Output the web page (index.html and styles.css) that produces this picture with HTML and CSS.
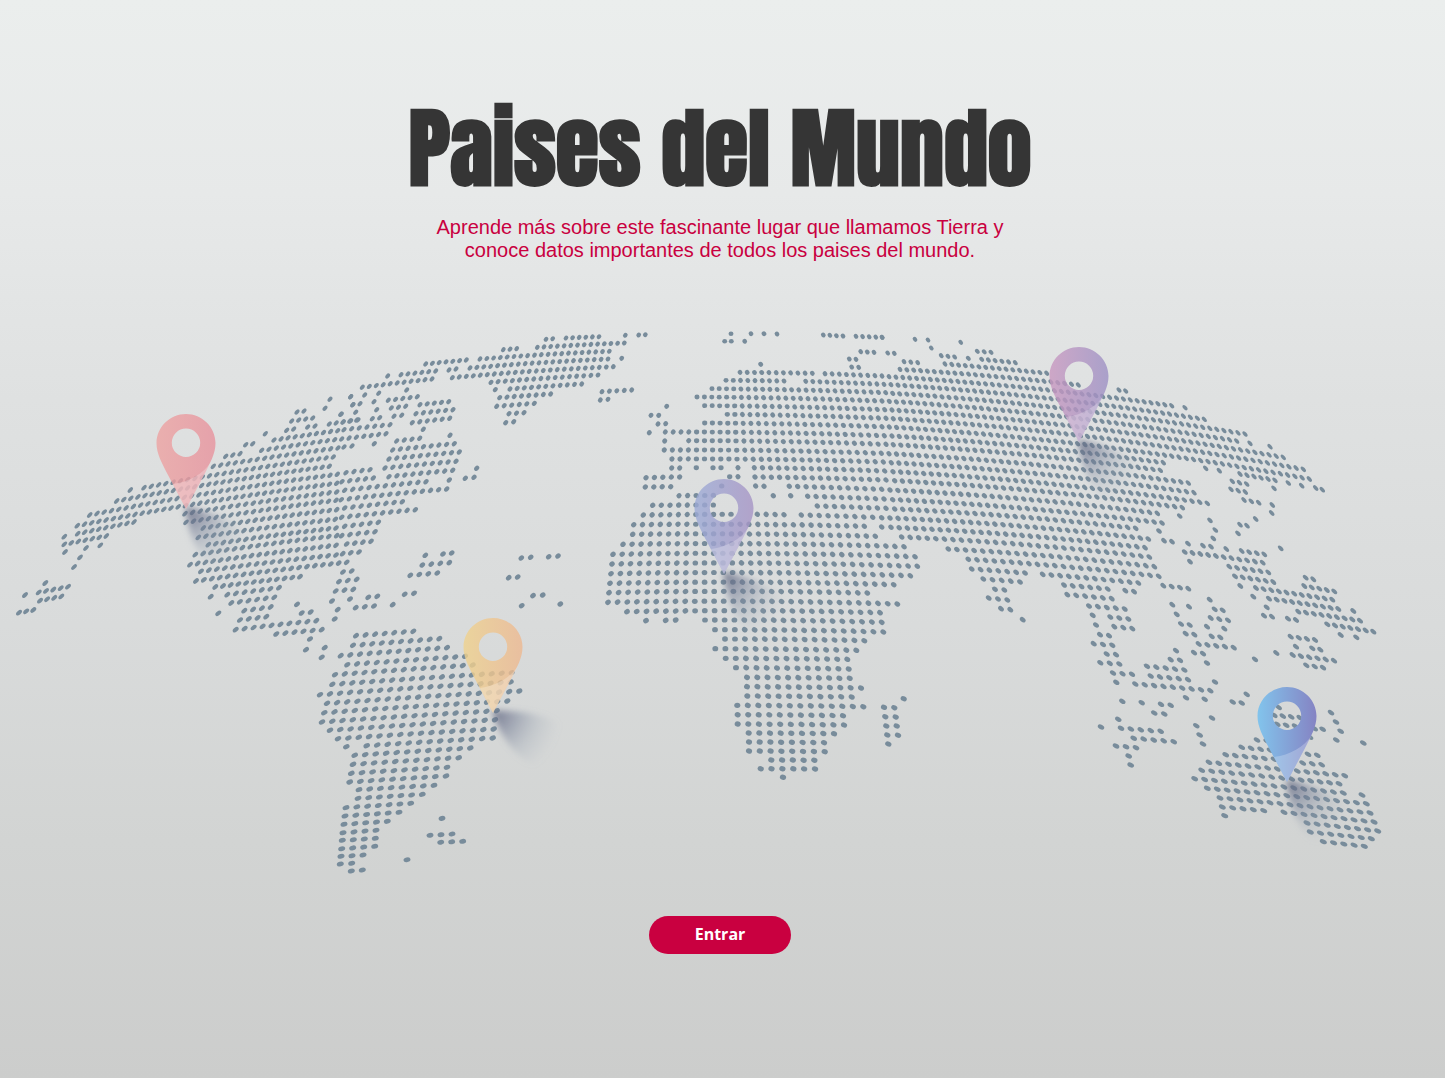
FILE: index.html
```html
<!DOCTYPE html>
<html lang="es">
<head>
  <meta charset="utf-8">
  <meta name="viewport" content="width=device-width, initial-scale=1">
  <title>Paises del Mundo</title>
  <link rel="stylesheet" href="styles.css">
</head>
<body>
  <main class="landing">
    <h1 class="title">Paises del Mundo</h1>
    <p class="intro">Aprende más sobre este fascinante lugar que llamamos Tierra y conoce datos importantes de todos los paises del mundo.</p>
    <svg class="map" viewBox="0 0 1445 565" role="img" aria-label="Mapa del mundo">
      <defs>
        <linearGradient id="red"><stop offset="0" stop-color="#eda3a2"/><stop offset="1" stop-color="#e7929d"/></linearGradient>
        <linearGradient id="orange"><stop offset="0" stop-color="#efd28d"/><stop offset="1" stop-color="#edb891"/></linearGradient>
        <linearGradient id="violet"><stop offset="0" stop-color="#9cabd6"/><stop offset="1" stop-color="#a694c5"/></linearGradient>
        <linearGradient id="purple"><stop offset="0" stop-color="#c998c0"/><stop offset="1" stop-color="#9c90c4"/></linearGradient>
        <linearGradient id="blue"><stop offset="0" stop-color="#82c4ec"/><stop offset="1" stop-color="#8583c3"/></linearGradient>
        <radialGradient id="shade" gradientUnits="userSpaceOnUse" cx="0" cy="0" r="68">
          <stop offset="0" stop-color="#5f657f" stop-opacity=".8"/>
          <stop offset=".3" stop-color="#6d7590" stop-opacity=".52"/>
          <stop offset=".65" stop-color="#8c98aa" stop-opacity=".24"/>
          <stop offset="1" stop-color="#a0aab8" stop-opacity="0"/>
        </radialGradient>
        <filter id="soft" x="-20%" y="-20%" width="140%" height="140%"><feGaussianBlur stdDeviation="3"/></filter>
        <path id="pin" fill-rule="evenodd" d="M0-95C-16-95-29.500-82-29.500-66C-29.500-55-24-46-18-34L0 0L18-34C24-46 29.500-55 29.500-66C29.500-82 16-95 0-95ZM0-80.500A14.200 14.200 0 1 1 0-52.100A14.200 14.200 0 1 1 0-80.500Z"/>
        <path id="tip" d="M-13-25C3-27 17-35 25-47L18-34L0 0Z"/>
        <path id="shadow" d="M-1-2C22-3 46 0 66 10L62 56C38 58 12 38-1-2Z"/>
      </defs>
      <g id="dots" class="dots"></g>
      <g class="pins">
        <g transform="translate(186 189)"><use href="#shadow" class="shadow" transform="rotate(13)"/><use href="#pin" fill="url(#red)" class="glass"/><use href="#tip" class="shine"/></g>
        <g transform="translate(493 393)"><use href="#shadow" class="shadow"/><use href="#pin" fill="url(#orange)" class="glass"/><use href="#tip" class="shine"/></g>
        <g transform="translate(724 254)"><use href="#shadow" class="shadow" transform="rotate(13)"/><use href="#pin" fill="url(#violet)" class="glass"/><use href="#tip" class="shine"/></g>
        <g transform="translate(1079 122)"><use href="#shadow" class="shadow" transform="rotate(13)"/><use href="#pin" fill="url(#purple)" class="glass"/><use href="#tip" class="shine"/></g>
        <g transform="translate(1287 462)"><use href="#shadow" class="shadow" transform="rotate(13)"/><use href="#pin" fill="url(#blue)"/><use href="#tip" class="shine"/></g>
      </g>
    </svg>
    <button class="enter" type="button">Entrar</button>
  </main>
  <script src="map.js"></script>
</body>
</html>
```
FILE: styles.css
```css
* {
  box-sizing: border-box;
}

body {
  margin: 0;
  min-height: 100vh;
  font-family: "Liberation Sans", Arial, sans-serif;
  background: linear-gradient(#ebeeed 0%, #e7e9e9 18%, #dfe1e1 37%, #d9dbdb 58%, #d2d4d3 78%, #cccdcc 100%);
}

.landing {
  display: flex;
  flex-direction: column;
  align-items: center;
  padding: 100px 0 120px;
}

.title {
  margin: 0;
  padding-right: 5px;
  color: #353535;
  font-family: Anton, "Liberation Sans Narrow", "Liberation Sans", sans-serif;
  font-size: 88px;
  font-weight: 700;
  line-height: 96px;
}

.intro {
  width: 100%;
  max-width: 580px;
  margin: 20px 5px 58px 0;
  color: #c90040;
  font-size: 20px;
  line-height: 23px;
  text-align: center;
}

.map {
  display: block;
  width: 100%;
  height: auto;
}

.dots {
  fill: #788c9b;
}

.shadow {
  fill: url(#shade);
  filter: url(#soft);
}

.glass {
  opacity: 0.8;
}

.shine {
  fill: #ffffff;
  opacity: 0.24;
}

.enter {
  width: 142px;
  height: 38px;
  margin: 31px 5px 0 0;
  padding: 0 0 2px;
  border: 0;
  border-radius: 19px;
  background: #c90040;
  color: #ffffff;
  font-family: "Open Sans", "Noto Sans", sans-serif;
  font-size: 16px;
  font-weight: 700;
  cursor: pointer;
}
```
FILE: map.js
```js
// Each region lists runs of dots, three units to a pixel, from its own origin.
// A run is "x y" (one dot), "x y x2 y2" (two dots) or "x y x2 y2 count".
const regions = [
  { x: 0, y: 0, bend: 0.0001, runs: `
57 878 100 870 3;75 825;120 842 184 829 4;116 817 204 800 5;136 789;222 741;240 712;258 684;301 676;195 696;
193 673 319 648 7;193 650;233 641 402 606 9;391 510;232 617 1010 490 37;269 585 1012 463 35;350 543 988 439 31;
432 503 1000 411 27;640 439 1014 384 18;677 409 720 401 3;785 391 1004 359 11;737 374 758 371;822 360 1013 332 10;
796 341;860 331 881 327;923 321 945 318;988 312 1070 300 5;875 303 938 294 4;1022 283;891 276 912 273;1067 277;
975 265;1058 254;990 238;1052 230;
555 581 1010 516 21;558 607 1008 541 21;610 624 1010 569 19;595 652 1006 598 19;625 674 1008 624 18;
586 704 1010 647 19;570 734 1008 676 20;603 754 1008 705 18;588 783 1040 727 20;646 801 900 770 12;
632 830;682 824 837 803 7;694 849 823 832 6;655 880;733 872 812 861 4;720 900 799 890 4;707 929 949 902 10;
829 942 965 929 6;905 879 932 876;891 853;930 957;1029 756 1055 753;1017 785 1070 778 3;1007 813 1060 808 3;
996 843;1050 837;1013 869;1004 897` },
  { x: 340, y: 0, bend: 0.0001, runs: `
12 329 150 314 7;5 357 138 341 7;12 381 36 378;103 371;18 458 90 449 4;135 444 348 424 10;6 485 100 474 5;
147 470 338 451 9;14 511 258 485 11;328 480;4 539 320 507 14;14 564 187 545 8;5 592 226 569 10;14 619 115 607 5;
5 647 105 635 5;20 672 93 664 4;8 701 57 696 3;147 417 358 396 10;158 390 343 371 9;170 363 239 355 4;330 346;
250 328;217 308 329 295 6;228 281 339 269 6;240 254 326 245 5;162 289 185 286;154 264 197 259 3;145 241 232 230 5;
200 210;97 296 119 293;110 269;102 245;116 220;10 306 54 300 3;4 283;39 254 60 251;32 230;74 225;
67 202 276 177 11;143 168;183 164 287 153 6;257 132 379 120 7;327 150 348 147;
618 58 638 56;678 54 777 50 6;592 82 853 69 14;490 89 530 86 3;420 117 808 94 20;390 144 804 117 21;
337 173 820 140 24;453 187 774 165 16;510 207 725 192 11;466 209;479 233 632 222 8;470 259 583 250 6;
507 281 552 278 3;497 308 521 305;856 46;896 45 916 44;845 115;786 215 875 210 5;781 240 804 238;
410 445;376 475 402 472;256 706;309 702 335 699;247 735 328 728 4;211 766 292 759 4;194 823 222 820;158 854;
85 832 112 829;47 863 102 858 3;544 714 572 712;626 710 654 708;506 773 533 771;579 827 608 825;545 857;661 852` },
  { x: 280, y: 280, bend: 0.00003, runs: `
228 107 400 94 7;219 136 478 116 10;182 167 501 143 12;202 194 555 169 13;165 224 578 195 15;157 253 695 218 19;
120 284 692 246 20;141 310 718 273 20;133 338 682 303 19;126 366 650 332 18;150 391 645 359 17;174 416 641 387 16;
199 440;260 437 638 414 13;224 466 571 444 12;219 493 536 473 11;214 520 501 502 10;209 546 498 528 10;
237 569 462 556 8;234 595 427 583 7;198 623 392 610 7;195 648 357 637 6;192 673 322 664 5;189 698 288 691 4;
187 721 286 715 4;185 746 284 739 4;183 769 249 765 3;181 792 215 790;214 813 247 810;
486 655;450 706 516 702 3;482 727 548 724 3;381 779;125 172;134 143;78 149` },
  { x: 580, y: 0, bend: 0.00006, runs: `
453 41;513 41;552 41;591 42;434 64 454 64;494 64;542 133;730 45 789 48 4;828 49 907 52 5;842 95 882 97 3;
923 99 943 100;808 117 828 118;815 141 836 142;480 157 697 160 11;735 161 906 168 9;438 181 612 183 9;
677 184 912 193 12;396 206 917 218 25;351 231 906 243 26;374 257 914 269 25;442 283 918 295 22;374 309 906 320 24;
208 338;256 336 913 347 29;254 363;326 362 918 373 26;253 390 904 400 28;276 417 910 426 27;275 444 299 444;
349 443;399 443 423 443;474 443;523 443 914 453 17;198 473 299 471 5;449 470 474 470;525 471 918 480 17;
196 501 272 500 4;425 498;527 498 552 499;628 499 905 508 12;297 527 400 526 5;580 527;632 527;683 529 912 537 10;
218 556 400 555 8;712 558 918 565 9;190 585 453 583 11;532 583 612 584 4;664 585 905 593 10;161 614 853 619 27;
905 621;158 643 886 649 28;129 673 972 680 32;99 703 1005 710 34;96 732 1012 739 34;93 761 991 767 33;
90 790 941 794 31;87 818 862 819 28;84 847 952 852 31;141 875 900 878 27;198 902;257 901 287 900;375 900 905 907 19;
405 929 910 936 18;435 957 853 962 15;260 259;213 286 236 286;234 312 257 311` },
  { x: 680, y: 240, bend: 0.00004, runs: `
106 266 529 271 15;137 295 502 298 13;168 323 506 327 12;201 352 509 355 11;201 380 543 384 12;202 408 515 411 11;
172 436 550 440 13;173 464 489 467 11;173 492 492 495 11;206 519 462 521 9;207 546 432 548 8;207 573 434 575 8;
274 600 403 601 5;242 626 405 627 6;309 652;671 416;612 442 643 443;616 470 647 471;619 498 650 498;
622 525 654 526;625 552` },
  { x: 880, y: 0, bend: 0.0001, runs: `
6 52;105 58;144 60;154 84;242 67;292 94 333 97 3;184 107 224 111 3;265 115;305 118 406 128 6;72 125 113 128 3;
195 132 500 160 16;60 148 595 195 27;717 210 737 213;27 170 875 257 42;915 263;33 194 973 298 46;
38 220 1095 342 51;28 244 1070 363 50;1110 370;36 270 1210 412 56;1170 380;40 296 1270 448 58;28 321 1288 477 59;
36 348 850 428 38;40 374 841 451 37;27 401 925 489 41;34 428 942 518 41;39 455 982 550 42;44 482 907 563 38;
30 510 832 580 35;38 539 846 609 35;44 567 767 625 31;30 594 805 657 33;33 622 795 683 32;65 651 808 711 30;
205 687 823 740 25;265 718 836 769 23;275 747 435 759 7;488 763 775 789 12;310 777 420 786 5;552 795 683 807 6;
736 812 762 815;345 808 373 810;562 824 695 836 6;326 834 382 840 3;627 858 734 867 5;363 866 391 869;638 886;
691 891 745 897 3;428 899;648 915;703 920 757 926 3;660 944 687 947` },
  { x: 1120, y: 40, bend: 0.0001, runs: `
257 325;298 332;360 342 465 361 6;505 369;545 377;587 384 607 389;337 364 380 372 3;462 385;333 388 376 396 3;
372 420 416 428 3;457 435;455 459;407 477;179 468;360 494 381 497;270 481;117 513;286 510;354 520;132 542 156 545;
280 535;204 551;249 557 273 560;319 567;365 573 433 583 4;482 565;194 576 428 608 11;210 605;328 620 445 637 6;
345 649 460 666 6;130 677 205 686 4;361 678;408 684 637 719 11;400 710;447 716 655 747 10;440 742;535 755 720 782 9;
432 767 456 770;504 776 528 780;622 793 760 815 7;662 825;709 832;557 653 580 658;553 678 643 694 5;700 753;
157 734;207 740;269 719;170 763;284 748 308 751;183 792 209 795;272 774 324 781 3;197 821 223 824;261 800;313 806;
275 829 301 832;236 852 341 863 5;222 878 249 881;261 909;405 898;469 879;512 830 585 840 4;528 860;577 865 601 869;
518 885 642 902 6;559 916 609 923 3;168 872;152 899 180 901` },
  { x: 1080, y: 300, bend: 0.00004, runs: `
41 71 97 76 3;80 102 108 104;61 128 118 132 3;99 159 156 163 3;109 187;127 244;185 248;115 298;63 321;
123 325 242 334 5;161 355 281 365 5;108 378 168 383 3;146 408;152 435;201 139 313 150 5;212 168 324 179 5;
166 192 391 212 9;223 279 253 282;243 253 272 256;318 233;374 238;405 186;349 317;359 345;369 372;396 294;
458 246 485 249;500 223;753 278;768 306;782 334;769 360;850 369;704 326 728 328;596 262;583 286 659 293 4;
592 313 645 318 3;531 360 560 363;690 352;485 382 570 391 4;437 404 582 418 6;387 427 592 447 8;365 451 605 474 9;
684 403 712 406;668 429 725 434 3;652 453 794 467 6;635 477 777 491 6;344 476 790 519 16;382 505 859 551 17;
420 534 870 579 16;846 525;427 561 551 572 5;612 577 882 606 10;434 587;681 609 893 633 8;691 636 874 656 7;
730 665 853 679 5` }
];

const layer = document.getElementById("dots");
const svgNs = "http://www.w3.org/2000/svg";

// Dots stretch along the diagonal towards the sides and flatten in the south.
function addDot(x, y) {
  const side = Math.max(-1, Math.min(1, (x - 715) / 560));
  const reach = Math.abs(side);
  const south = Math.max(0, Math.min(1, y / 520));
  const size = 2.3 + 0.8 * south;
  const stretch = 0.34 * reach * (1 - 0.5 * south);
  const dot = document.createElementNS(svgNs, "ellipse");
  const tilt = reach < 0.04 ? 0 : Math.sign(side) * (50 - (50 - 24 * reach) * south * south);
  dot.setAttribute("rx", (size * (1.04 + stretch)).toFixed(2));
  dot.setAttribute("ry", (size * (1 - stretch - 0.14 * south * south)).toFixed(2));
  dot.setAttribute("transform", `translate(${x.toFixed(1)} ${y.toFixed(1)}) rotate(${tilt.toFixed(0)})`);
  layer.appendChild(dot);
}

for (const region of regions) {
  for (const run of region.runs.split(";")) {
    const [x1, y1, x2 = x1, y2 = y1, given] = run.trim().split(" ").map(Number);
    const count = given || (x2 === x1 ? 1 : 2);
    const length = x2 - x1;
    for (let i = 0; i < count; i++) {
      const t = count > 1 ? i / (count - 1) : 0;
      const sag = region.bend / 2 * length * length * t * (1 - t);
      addDot(region.x + (x1 + length * t) / 3, region.y + (y1 + (y2 - y1) * t - sag) / 3);
    }
  }
}
```
